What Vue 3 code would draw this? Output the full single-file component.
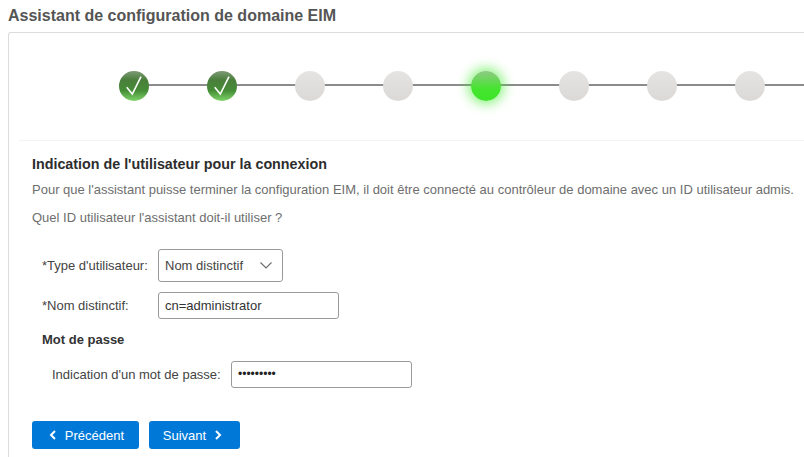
<script setup>
const steps = ['done','done','todo','todo','active','todo','todo','todo']
</script>

<template>
  <div class="page">
    <h1 class="title">Assistant de configuration de domaine EIM</h1>
    <div class="card">
      <div class="stepper">
        <div class="line"></div>
        <div v-for="(s,i) in steps" :key="i" class="dot" :class="s">
          <svg v-if="s==='done'" width="30" height="30" viewBox="0 0 30 30" fill="none">
            <path d="M7.7 16.3 L13.3 23 L22 5.7" stroke="#fff" stroke-width="1.6"/>
          </svg>
        </div>
      </div>
      <div class="content">
        <h2 class="heading">Indication de l'utilisateur pour la connexion</h2>
        <p class="desc first">Pour que l'assistant puisse terminer la configuration EIM, il doit être connecté au contrôleur de domaine avec un ID utilisateur admis.</p>
        <p class="desc second">Quel ID utilisateur l'assistant doit-il utiliser ?</p>
        <div class="form">
          <div class="row r1">
            <label class="lab">*Type d'utilisateur:</label>
            <div class="select">
              <span>Nom distinctif</span>
              <svg width="12" height="7" viewBox="0 0 12 7" fill="none"><path d="M0.5 0.5 L6 6 L11.5 0.5" stroke="#6f6f6f" stroke-width="1.2"/></svg>
            </div>
          </div>
          <div class="row r2">
            <label class="lab">*Nom distinctif:</label>
            <div class="input">cn=administrator</div>
          </div>
          <div class="sub">Mot de passe</div>
          <div class="row r3">
            <label class="lab2">Indication d'un mot de passe:</label>
            <div class="input pw">•••••••••</div>
          </div>
        </div>
        <div class="buttons">
          <button class="btn prev">
            <svg width="8" height="10" viewBox="0 0 8 10" fill="none"><path d="M6 1 L2 5 L6 9" stroke="#fff" stroke-width="2"/></svg>
            <span>Précédent</span>
          </button>
          <button class="btn next">
            <span>Suivant</span>
            <svg width="8" height="10" viewBox="0 0 8 10" fill="none"><path d="M2 1 L6 5 L2 9" stroke="#fff" stroke-width="2"/></svg>
          </button>
        </div>
      </div>
    </div>
  </div>
</template>

<style>
html, body { margin: 0; background: #fff; overflow: hidden; }
</style>

<style scoped>
.page {
  width: 804px;
  height: 457px;
  overflow: hidden;
  font-family: "Liberation Sans", Arial, sans-serif;
  padding: 0 0 0 8px;
  box-sizing: border-box;
}
.title {
  margin: 0;
  padding-top: 6px;
  box-sizing: border-box;
  height: 32px;
  font-size: 16px;
  line-height: 19px;
  font-weight: 700;
  color: #555;
}
.card {
  border: 1px solid #dcdcdc;
  border-right: none;
  border-radius: 3px 0 0 0;
  height: 440px;
  box-sizing: border-box;
  padding: 0 0 0 10px;
}
.stepper {
  position: relative;
  display: flex;
  gap: 58px;
  padding: 38px 0 0 100px;
  height: 108px;
  box-sizing: border-box;
  border-bottom: 1px solid #f3f3f3;
}
.line {
  position: absolute;
  left: 100px;
  right: 0;
  top: 51px;
  height: 2px;
  background: #8c8c8c;
}
.dot {
  position: relative;
  flex: none;
  width: 30px;
  height: 30px;
  border-radius: 50%;
}
.done { background: linear-gradient(180deg, #7d9a75 0%, #4a7f3c 30%, #458c36 65%, #7ed469 100%); }
.todo { background: linear-gradient(180deg, #e6e3e3 0%, #dbd8d8 100%); }
.active {
  background: linear-gradient(180deg, #8fc984 0%, #44e52e 60%, #3ee52a 100%);
  box-shadow: 0 0 12px 3px rgba(60,235,40,.6);
}
.content {
  padding: 0 0 0 13px;
}
.heading {
  margin: 15px 0 0;
  font-size: 14.3px;
  line-height: 16px;
  font-weight: 700;
  color: #2d2d2d;
}
.desc {
  margin: 0;
  font-size: 13px;
  line-height: 15px;
  color: #6e6e6e;
  white-space: nowrap;
}
.first { margin-top: 10px; }
.second { margin-top: 13px; }
.form { padding-left: 10px; margin-top: 24px; }
.row { display: flex; align-items: center; }
.lab { width: 116px; font-size: 13px; color: #444; }
.lab2 { width: 189px; padding-left: 10px; box-sizing: border-box; font-size: 13px; color: #444; }
.select {
  width: 125px;
  height: 33px;
  box-sizing: border-box;
  border: 1px solid #9a9a9a;
  border-radius: 3px;
  display: flex;
  align-items: center;
  justify-content: space-between;
  padding: 0 10px 0 6px;
  font-size: 13px;
  color: #444;
}
.input {
  width: 181px;
  height: 27px;
  box-sizing: border-box;
  border: 1px solid #9a9a9a;
  border-radius: 3px;
  padding: 0 6px;
  font-size: 13px;
  line-height: 25px;
  color: #333;
}
.pw { color: #222; font-size: 12px; }
.r2 { margin-top: 10px; }
.sub {
  margin-top: 14px;
  font-size: 13px;
  line-height: 14px;
  font-weight: 700;
  color: #333;
}
.r3 { margin-top: 14px; }
.buttons { display: flex; gap: 10px; margin-top: 33px; }
.btn {
  height: 28px;
  border: none;
  border-radius: 3px;
  background: #0078d7;
  color: #fff;
  font: 13px "Liberation Sans", Arial, sans-serif;
  display: flex;
  align-items: center;
  gap: 8px;
  justify-content: center;
}
.prev { width: 107px; padding: 0 0 0 2px; }
.next { width: 91px; padding: 0 4px 0 0; }
</style>
